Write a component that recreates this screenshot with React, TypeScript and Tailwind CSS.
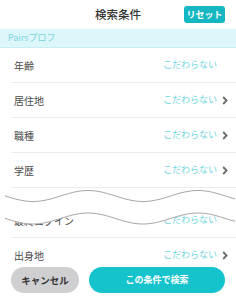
import React from 'react';

interface Row {
  label: string;
  arrow: boolean;
}

const topRows: Row[] = [
  { label: '年齢', arrow: false },
  { label: '居住地', arrow: true },
  { label: '職種', arrow: true },
  { label: '学歴', arrow: true },
];

const bottomRows: Row[] = [
  { label: '最終ログイン', arrow: false },
  { label: '出身地', arrow: true },
];

const Chevron: React.FC<{ show: boolean }> = ({ show }) => (
  <svg width="6" height="9" viewBox="0 0 6 9" className={show ? 'ml-[5px]' : 'ml-[5px] invisible'}>
    <path d="M1.2 1 L4.6 4.5 L1.2 8" fill="none" stroke="#6b6b6b" strokeWidth="1.8" />
  </svg>
);

const ConditionRow: React.FC<{ row: Row }> = ({ row }) => (
  <div className="ml-[11px] h-[35px] flex items-center justify-between border-b border-[#ececec] pl-[3px] pr-[8px]">
    <span className="text-[10px] text-[#4a4a4a]">{row.label}</span>
    <div className="flex items-center">
      <span className="text-[9px] text-[#6fd6df]">こだわらない</span>
      <Chevron show={row.arrow} />
    </div>
  </div>
);

// torn-paper style wave that hides part of the list
const Wave: React.FC = () => {
  const wave = (base: number) => {
    const pts: string[] = [];
    for (let x = 5; x <= 236; x += 2) {
      const y = base + 5.5 * Math.cos((2 * Math.PI * (x - 33)) / 110);
      pts.push(`${x},${y.toFixed(2)}`);
    }
    return pts;
  };
  const upper = wave(11);
  const lower = wave(33.5);
  const fill = `M${upper.join(' L')} L${[...lower].reverse().join(' L')} Z`;
  return (
    <svg className="absolute left-0 top-[185px]" width="236" height="45" viewBox="0 0 236 45">
      <path d={fill} fill="#ffffff" />
      <polyline points={upper.join(' ')} fill="none" stroke="#a8a8a8" strokeWidth="1" />
      <polyline points={lower.join(' ')} fill="none" stroke="#a8a8a8" strokeWidth="1" />
    </svg>
  );
};

export default function App() {
  return (
    <div className="relative w-[236px] h-[300px] bg-white flex flex-col overflow-hidden font-['Noto_Sans_CJK_JP',sans-serif]">
      <div className="h-[29px] shrink-0 grid grid-cols-[1fr_auto_1fr] items-center">
        <div />
        <h1 className="text-[11.5px] font-medium text-[#333] pt-[1px]">検索条件</h1>
        <div className="flex justify-end pr-[11px]">
          <button className="h-[17px] w-[41px] rounded-[3px] bg-[#15b7c2] text-white text-[9px] font-bold">
            リセット
          </button>
        </div>
      </div>

      <div className="flex-1 overflow-hidden">
        <div className="h-[19px] bg-[#ddf6f9] border-b border-[#c8eef2] flex items-center px-[8px]">
          <span className="text-[9px] text-[#79d5de]">Pairsプロフ</span>
        </div>
        {topRows.map((row) => (
          <ConditionRow key={row.label} row={row} />
        ))}
        <div className="h-[15px]" />
        {bottomRows.map((row) => (
          <ConditionRow key={row.label} row={row} />
        ))}
      </div>

      <div className="shrink-0 flex gap-[10px] px-[11px] pt-[5px] pb-[7px]">
        <button className="w-[68px] h-[26px] rounded-full bg-[#cfcfd1] text-[9.5px] font-bold text-[#333]">
          キャンセル
        </button>
        <button className="flex-1 h-[26px] rounded-full bg-[#14c3cc] text-[9px] font-bold text-white">
          この条件で検索
        </button>
      </div>

      <Wave />
    </div>
  );
}
